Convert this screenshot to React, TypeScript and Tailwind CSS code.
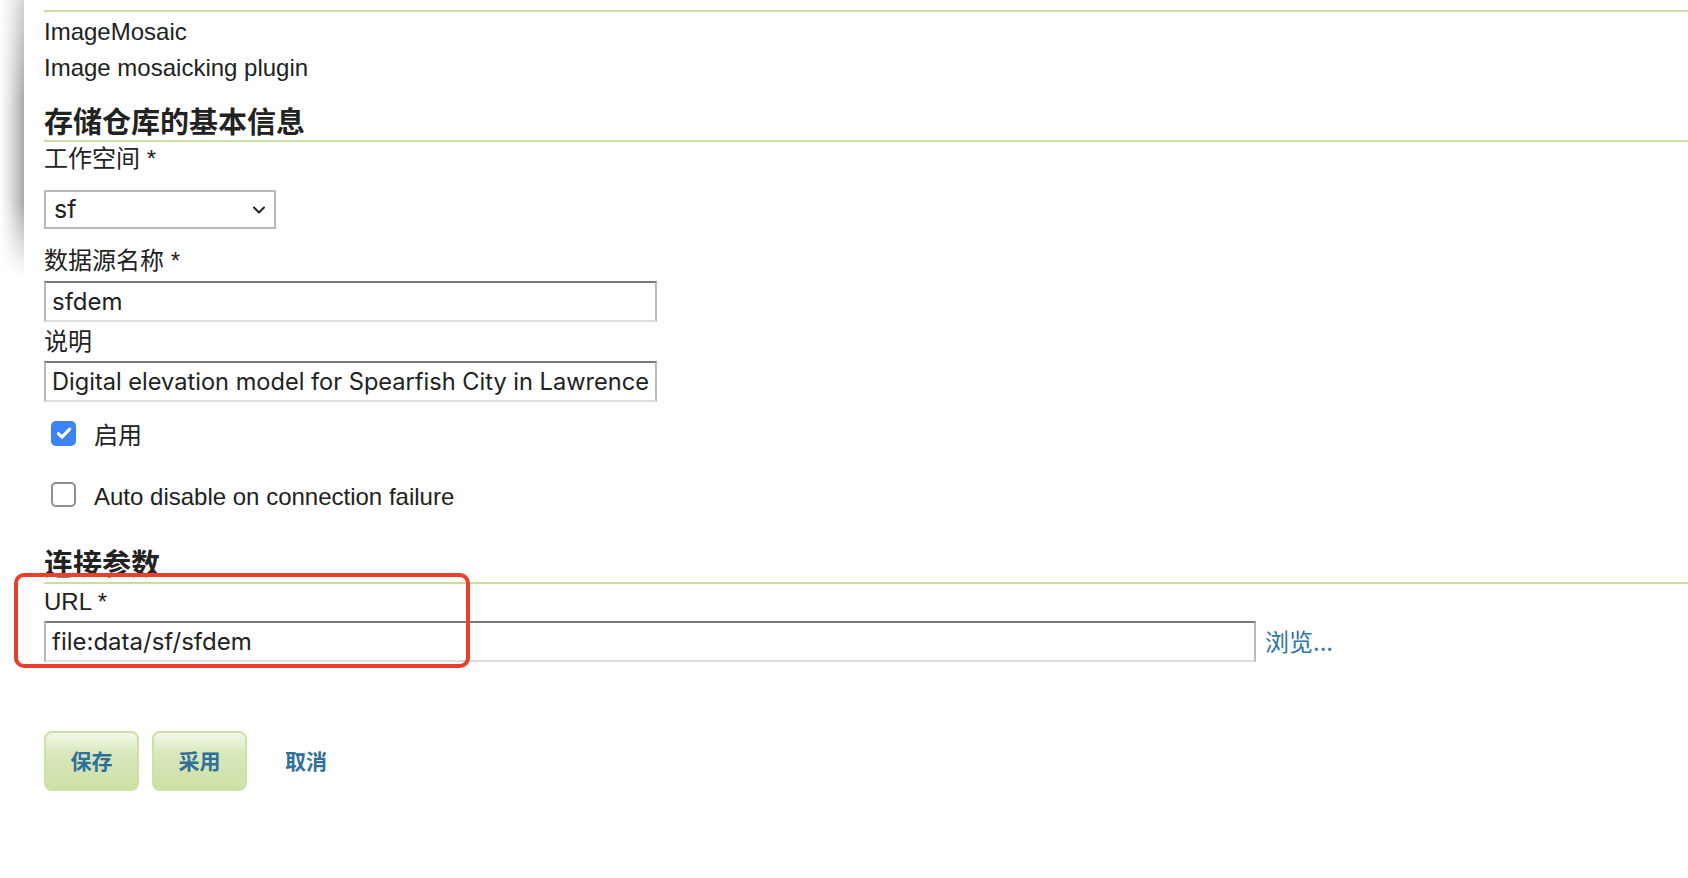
import React from 'react';

const label = "font-['Liberation_Sans','Noto_Sans_CJK_SC',sans-serif] text-[24px] text-[#222]";
const field = "font-['Inter','Noto_Sans_CJK_SC',sans-serif] text-[24px] text-[#222]";
const inputBox =
    'h-[41px] border-2 border-t-[#7a7a7a] border-x-[#b9b9b9] border-b-[#dcdcdc] bg-white pl-[6px] flex items-center overflow-hidden whitespace-nowrap';

const Rule: React.FC = () => <div className="h-[2px] bg-[#cbde9e]" />;

const Check: React.FC<{ on?: boolean }> = ({ on }) =>
    on ? (
        <span className="w-[25px] h-[25px] rounded-[5px] bg-[#3b84f5] flex items-center justify-center">
            <svg width="18" height="18" viewBox="0 0 16 16" fill="none">
                <path d="M3 8.5l3.2 3.2L13 4.5" stroke="#fff" strokeWidth="2.8" strokeLinecap="round" strokeLinejoin="round" />
            </svg>
        </span>
    ) : (
        <span className="w-[25px] h-[25px] rounded-[5px] border-2 border-[#8e8e96] bg-white" />
    );

const GreenButton: React.FC<{ text: string }> = ({ text }) => (
    <button
        type="button"
        className="w-[95px] h-[60px] rounded-[8px] border-2 border-[#cde1a6] bg-[linear-gradient(to_bottom,#f4f8ec_0%,#d9e8bd_35%,#cde0a6_100%)] text-[21px] font-bold text-[#2f6f9c] font-['Noto_Sans_CJK_SC',sans-serif]"
    >
        {text}
    </button>
);

const App: React.FC = () => {
    return (
        <div className="relative min-h-screen bg-white overflow-hidden">
            {/* shadow of the panel on the left */}
            <div className="absolute left-0 top-0 w-[24px] h-[290px] bg-[linear-gradient(to_right,#ffffff_0%,#e4e4e4_40%,#a9a9a9_100%)] [mask-image:linear-gradient(to_bottom,rgba(0,0,0,0.5)_0%,#000_35%,#000_70%,transparent_95%)]" />

            <div className="pl-[44px] pt-[10px]">
                <Rule />
                <div className={`${label} mt-[2px] h-[36px] leading-[36px]`}>ImageMosaic</div>
                <div className={`${label} h-[36px] leading-[36px]`}>Image mosaicking plugin</div>

                <div className="mt-[14px] h-[40px] leading-[40px] text-[29px] font-bold text-[#222] font-['Noto_Sans_CJK_SC',sans-serif]">
                    存储仓库的基本信息
                </div>
                <Rule />
                <div className={`${label} h-[34px] leading-[34px]`}>工作空间 *</div>

                <div className={`${field} mt-[14px] w-[232px] h-[39px] border-2 border-[#b9b9b9] bg-white flex items-center justify-between pl-[8px] pr-[8px]`}>
                    <span className="text-[25px]">sf</span>
                    <svg width="14" height="10" viewBox="0 0 14 10" fill="none">
                        <path d="M2 2.5l5 5 5-5" stroke="#222" strokeWidth="2" strokeLinecap="round" strokeLinejoin="round" />
                    </svg>
                </div>

                <div className={`${label} mt-[15px] h-[34px] leading-[34px]`}>数据源名称 *</div>
                <div className={`${field} ${inputBox} mt-[3px] w-[613px]`}>sfdem</div>

                <div className={`${label} h-[39px] leading-[39px]`}>说明</div>
                <div className={`${field} ${inputBox} w-[613px]`}>
                    <span className="text-[23.6px]">Digital elevation model for Spearfish City in Lawrence</span>
                </div>

                <div className="mt-[18px] h-[26px] flex items-center gap-[18px] pl-[7px]">
                    <Check on />
                    <span className={`${label} leading-[20px] mt-[6px]`}>启用</span>
                </div>
                <div className="mt-[35px] h-[26px] flex items-center gap-[18px] pl-[7px]">
                    <Check />
                    <span className={`${label} leading-[20px] mt-[6px]`}>Auto disable on connection failure</span>
                </div>

                <div className="mt-[35px] h-[40px] leading-[40px] text-[29px] font-bold text-[#222] font-['Noto_Sans_CJK_SC',sans-serif]">
                    连接参数
                </div>
                <Rule />
                <div className={`${label} h-[36px] leading-[36px]`}>URL *</div>
                <div className="mt-[1px] flex items-center gap-[9px]">
                    <div className={`${field} ${inputBox} w-[1212px]`}>file:data/sf/sfdem</div>
                    <a className="text-[24px] leading-[30px] mb-[2px] text-[#2e74a8] font-['Noto_Sans_CJK_SC',sans-serif] cursor-pointer">浏览...</a>
                </div>

                <div className="mt-[69px] flex items-center">
                    <GreenButton text="保存" />
                    <div className="ml-[13px]">
                        <GreenButton text="采用" />
                    </div>
                    <a className="ml-[38px] text-[21px] font-bold text-[#2f6f9c] font-['Noto_Sans_CJK_SC',sans-serif] cursor-pointer">
                        取消
                    </a>
                </div>
            </div>

            {/* annotation box */}
            <div className="absolute left-[14px] top-[573px] w-[456px] h-[95px] border-[4px] border-[#e8402a] rounded-[10px] pointer-events-none" />
        </div>
    );
};

export default App;
